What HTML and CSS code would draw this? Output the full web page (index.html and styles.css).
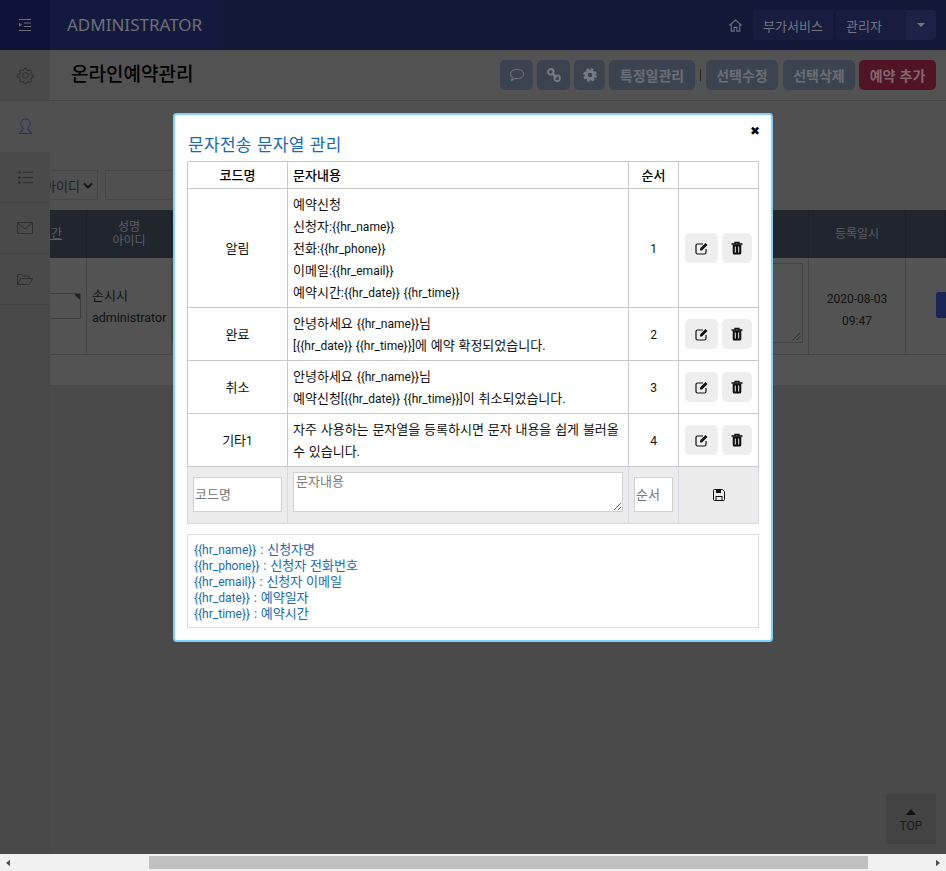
FILE: index.html
```html
<!DOCTYPE html>
<html lang="ko">
<head>
<meta charset="utf-8">
<title>온라인예약관리</title>
<link rel="stylesheet" href="styles.css">
</head>
<body>
<div class="page">
  <header class="topbar">
    <div class="burger">
      <svg class="ico16" viewBox="0 0 14 14"><path d="M1 1.500h12M6 5h7M6 8.500h7M1 12.500h12" stroke="#6a6f80" fill="none"/><path d="M1 4.800l3 2-3 2z" fill="#6a6f80"/></svg>
    </div>
    <div class="brand">ADMINISTRATOR</div>
    <nav class="topnav">
      <svg class="home" viewBox="0 0 16 16"><path d="M1.500 8L8 2l6.500 6M3.500 7v7h3v-4h3v4h3V7" fill="none" stroke="#70747f" stroke-width="1.100"/></svg>
      <span class="navbtn service">부가서비스</span>
      <span class="navgroup"><span class="navbtn admin">관리자</span><span class="navbtn caret"><i></i></span></span>
    </nav>
  </header>
  <div class="body">
    <aside class="side">
      <div class="sideitem">
        <svg class="ico18" viewBox="0 0 18 18"><circle cx="9" cy="9" r="3" fill="none" stroke="#2a2a2a"/><path d="M7.800 1.500h2.400l.4 2 1.500.7 1.800-1.100 1.700 1.700-1.100 1.800.7 1.500 2 .4v2.400l-2 .4-.7 1.500 1.100 1.800-1.700 1.700-1.800-1.100-1.500.7-.4 2H7.800l-.4-2-1.500-.7-1.800 1.100-1.700-1.700 1.100-1.800-.7-1.500-2-.4V8l2-.4.7-1.500-1.100-1.800 1.700-1.700 1.800 1.100 1.500-.7z" fill="none" stroke="#2a2a2a"/></svg>
      </div>
      <div class="sideitem active">
        <svg class="ico18" viewBox="0 0 18 18"><path d="M2 16.500h14M3 16.500c0-3 3.500-3 3.500-5.500C4.800 9.500 4 7.500 4 6c0-3 2-5 5-5s5 2 5 5c0 1.500-.8 3.500-2.500 5 0 2.500 3.500 2.500 3.500 5.500" fill="none" stroke="#25306e" stroke-width="1.100"/></svg>
      </div>
      <div class="sideitem">
        <svg class="ico18" viewBox="0 0 18 18"><path d="M6 3.500h11M6 9h11M6 14.500h11" stroke="#2a2a2a" fill="none"/><path d="M2.500 2v3M1 3.500h3M2.500 7.500v3M1 9h3M2.500 13v3M1 14.500h3" stroke="#2a2a2a" fill="none"/></svg>
      </div>
      <div class="sideitem">
        <svg class="ico-mail" viewBox="0 0 16 12"><path d="M.5.500h15v11H.500zM.5 1l7.500 6 7.500-6" fill="none" stroke="#2a2a2a" stroke-width=".8"/></svg>
      </div>
      <div class="sideitem">
        <svg class="ico-mail" viewBox="0 0 16 12"><path d="M.5 11.500V1.500h4.500l1.500 1.500h6v2.500M.5 11.500h12l3-6H3.500z" fill="none" stroke="#2a2a2a" stroke-width=".8"/></svg>
      </div>
    </aside>
    <main class="main">
      <div class="titlebar">
        <h1 class="pagetitle">온라인예약관리</h1>
        <div class="actions">
          <span class="btn ic33"><svg class="ico16" viewBox="0 0 16 16"><path d="M8 2.500c3.600 0 6.500 1.800 6.500 4.500S11.600 11.500 8 11.500c-.8 0-1.500-.1-2.200-.2L2.500 13.500l1-3C2.200 9.600 1.500 8.400 1.500 7 1.500 4.300 4.400 2.500 8 2.500z" fill="none" stroke="#6b7078" stroke-width="1.200"/></svg></span>
          <span class="btn ic33"><svg class="ico16" viewBox="0 0 16 16"><path d="M6 6l4.500 4.500" stroke="#777c84" stroke-width="2.400"/><circle cx="4.800" cy="4.800" r="2.800" fill="none" stroke="#777c84" stroke-width="1.800"/><circle cx="11.200" cy="11.200" r="2.800" fill="none" stroke="#777c84" stroke-width="1.800"/></svg></span>
          <span class="btn ic31"><svg class="ico14" viewBox="0 0 14 14"><circle cx="7" cy="7" r="3.800" fill="none" stroke="#777c84" stroke-width="3"/><circle cx="7" cy="7" r="5.700" fill="none" stroke="#777c84" stroke-width="2.200" stroke-dasharray="2.600 1.875"/></svg></span>
          <span class="btn wide">특정일관리</span>
          <span class="sep"></span>
          <span class="btn">선택수정</span>
          <span class="btn after">선택삭제</span>
          <span class="btn red">예약 추가</span>
        </div>
      </div>
      <section class="content">
        <div class="search">
          <span class="selectbox"><span class="selecttext">아이디</span><svg class="chev" viewBox="0 0 10 7"><path d="M1 1.500l4 4 4-4" fill="none" stroke="#111" stroke-width="2"/></svg></span>
          <span class="searchinput"></span>
        </div>
        <div class="bgtable">
          <div class="bgcol c1">
            <div class="bghead"><span class="clip">기간</span></div>
            <div class="bgcell"><span class="bgbox"></span></div>
          </div>
          <div class="bgcol c2">
            <div class="bghead">성명<br>아이디</div>
            <div class="bgcell leftcell">손시시<br><span class="idtext">administrator</span></div>
          </div>
          <div class="bgcol c3">
            <div class="bghead"></div>
            <div class="bgcell endcell"><span class="bgarea"><svg class="grip" viewBox="0 0 10 10"><path d="M1 9l8-8M5 9l4-4" stroke="#2a2a2a"/></svg></span></div>
          </div>
          <div class="bgcol c4">
            <div class="bghead">등록일시</div>
            <div class="bgcell textcell">2020-08-03<br>09:47</div>
          </div>
          <div class="bgcol c5">
            <div class="bghead"></div>
            <div class="bgcell startcell"><span class="bluebtn"></span></div>
          </div>
        </div>
        <div class="bgfoot"></div>
      </section>
    </main>
  </div>
  <div class="hscroll">
    <svg class="arrow" viewBox="0 0 5 8"><path d="M5 0v8L0 4z" fill="#505050"/></svg>
    <div class="track"><div class="thumb"></div></div>
    <svg class="arrow" viewBox="0 0 5 8"><path d="M0 0v8l5-4z" fill="#505050"/></svg>
  </div>
</div>

<a class="totop"><i class="uptri"></i>TOP</a>

<div class="modal">
  <span class="close">✖</span>
  <h2 class="modaltitle">문자전송 문자열 관리</h2>
  <table class="smstable">
    <colgroup><col class="w1"><col class="w2"><col class="w3"><col class="w4"></colgroup>
    <thead>
      <tr><th>코드명</th><th class="left">문자내용</th><th>순서</th><th></th></tr>
    </thead>
    <tbody>
      <tr>
        <td>알림</td>
        <td class="left">예약신청<br>신청자:<span class="lt">{{hr_name}}</span><br>전화:<span class="lt">{{hr_phone}}</span><br>이메일:<span class="lt">{{hr_email}}</span><br>예약시간:<span class="lt">{{hr_date}} {{hr_time}}</span></td>
        <td class="num">1</td>
        <td><div class="rowbtns">
          <span class="mbtn edit"><svg class="ico14" viewBox="0 0 14 14"><path d="M11 8v3.500a1.500 1.500 0 0 1-1.500 1.500h-7A1.500 1.500 0 0 1 1 11.500v-7A1.500 1.500 0 0 1 2.500 3H8" fill="none" stroke="#111" stroke-width="1.200"/><path d="M5 7.500L10.500 2l2 2L7 9.500H5z" fill="#111"/></svg></span>
          <span class="mbtn del"><svg class="ico14" viewBox="0 0 14 14"><path d="M1.500 3h11M5 3V1.300h4V3" fill="none" stroke="#111" stroke-width="1.300"/><path d="M2.700 3.500h8.600v8.500a1.500 1.500 0 0 1-1.500 1.500H4.200A1.500 1.500 0 0 1 2.700 12z" fill="#111"/><path d="M5.300 5.500v6M8.700 5.500v6" stroke="#eee"/></svg></span>
        </div></td>
      </tr>
      <tr>
        <td>완료</td>
        <td class="left">안녕하세요 <span class="lt">{{hr_name}}</span>님<br><span class="lt">[{{hr_date}} {{hr_time}}]</span>에 예약 확정되었습니다.</td>
        <td class="num">2</td>
        <td><div class="rowbtns">
          <span class="mbtn edit"><svg class="ico14" viewBox="0 0 14 14"><path d="M11 8v3.500a1.500 1.500 0 0 1-1.500 1.500h-7A1.500 1.500 0 0 1 1 11.500v-7A1.500 1.500 0 0 1 2.500 3H8" fill="none" stroke="#111" stroke-width="1.200"/><path d="M5 7.500L10.500 2l2 2L7 9.500H5z" fill="#111"/></svg></span>
          <span class="mbtn del"><svg class="ico14" viewBox="0 0 14 14"><path d="M1.500 3h11M5 3V1.300h4V3" fill="none" stroke="#111" stroke-width="1.300"/><path d="M2.700 3.500h8.600v8.500a1.500 1.500 0 0 1-1.500 1.500H4.200A1.500 1.500 0 0 1 2.700 12z" fill="#111"/><path d="M5.300 5.500v6M8.700 5.500v6" stroke="#eee"/></svg></span>
        </div></td>
      </tr>
      <tr>
        <td>취소</td>
        <td class="left">안녕하세요 <span class="lt">{{hr_name}}</span>님<br>예약신청<span class="lt">[{{hr_date}} {{hr_time}}]</span>이 취소되었습니다.</td>
        <td class="num">3</td>
        <td><div class="rowbtns">
          <span class="mbtn edit"><svg class="ico14" viewBox="0 0 14 14"><path d="M11 8v3.500a1.500 1.500 0 0 1-1.500 1.500h-7A1.500 1.500 0 0 1 1 11.500v-7A1.500 1.500 0 0 1 2.500 3H8" fill="none" stroke="#111" stroke-width="1.200"/><path d="M5 7.500L10.500 2l2 2L7 9.500H5z" fill="#111"/></svg></span>
          <span class="mbtn del"><svg class="ico14" viewBox="0 0 14 14"><path d="M1.500 3h11M5 3V1.300h4V3" fill="none" stroke="#111" stroke-width="1.300"/><path d="M2.700 3.500h8.600v8.500a1.500 1.500 0 0 1-1.500 1.500H4.200A1.500 1.500 0 0 1 2.700 12z" fill="#111"/><path d="M5.300 5.500v6M8.700 5.500v6" stroke="#eee"/></svg></span>
        </div></td>
      </tr>
      <tr>
        <td>기타<span class="lt">1</span></td>
        <td class="left">자주 사용하는 문자열을 등록하시면 문자 내용을 쉽게 불러올 수 있습니다.</td>
        <td class="num">4</td>
        <td><div class="rowbtns">
          <span class="mbtn edit"><svg class="ico14" viewBox="0 0 14 14"><path d="M11 8v3.500a1.500 1.500 0 0 1-1.500 1.500h-7A1.500 1.500 0 0 1 1 11.500v-7A1.500 1.500 0 0 1 2.500 3H8" fill="none" stroke="#111" stroke-width="1.200"/><path d="M5 7.500L10.500 2l2 2L7 9.500H5z" fill="#111"/></svg></span>
          <span class="mbtn del"><svg class="ico14" viewBox="0 0 14 14"><path d="M1.500 3h11M5 3V1.300h4V3" fill="none" stroke="#111" stroke-width="1.300"/><path d="M2.700 3.500h8.600v8.500a1.500 1.500 0 0 1-1.500 1.500H4.200A1.500 1.500 0 0 1 2.700 12z" fill="#111"/><path d="M5.300 5.500v6M8.700 5.500v6" stroke="#eee"/></svg></span>
        </div></td>
      </tr>
      <tr class="formrow">
        <td><input class="field codeinput" placeholder="코드명"></td>
        <td><textarea class="field textinput" placeholder="문자내용"></textarea></td>
        <td><input class="field orderinput" placeholder="순서"></td>
        <td class="savecell"><svg class="ico12" viewBox="0 0 12 12"><path d="M1.500.500h8l2 2v8a1 1 0 0 1-1 1h-9a1 1 0 0 1-1-1v-9a1 1 0 0 1 1-1z" fill="none" stroke="#111"/><path d="M3 1h5v3H3zM2.500 7h7v4.500h-7z" fill="#111"/><path d="M3.500 8h5v3h-5z" fill="#eee"/></svg></td>
      </tr>
    </tbody>
  </table>
  <div class="legend">
    <span class="lt">{{hr_name}}</span> : 신청자명<br>
    <span class="lt">{{hr_phone}}</span> : 신청자 전화번호<br>
    <span class="lt">{{hr_email}}</span> : 신청자 이메일<br>
    <span class="lt">{{hr_date}}</span> : 예약일자<br>
    <span class="lt">{{hr_time}}</span> : 예약시간
  </div>
</div>
</body>
</html>
```
FILE: styles.css
```css
* { box-sizing: border-box; }
html, body { margin: 0; height: 100%; overflow: hidden; }
body { font-family: Roboto, "Noto Sans CJK KR", sans-serif; font-size: 13px; color: #111; background: #4a4a4a; word-spacing: .6px; }
svg { display: block; }
.lt { font-size: 12px; line-height: 1; }
.ico12 { width: 12px; height: 12px; margin: 0 auto; }
.ico14 { width: 14px; height: 14px; }
.ico16 { width: 16px; height: 16px; }
.ico18 { width: 17px; height: 17px; }
.ico-mail { width: 16px; height: 12px; }

.page { height: 871px; display: flex; flex-direction: column; }

/* top bar */
.topbar { height: 50px; flex: none; display: flex; align-items: center; background: #131838; }
.burger { width: 50px; height: 50px; background: #0f1338; display: flex; align-items: center; justify-content: center; }
.burger .ico16 { width: 14px; height: 14px; }
.brand { width: 170px; height: 50px; padding-left: 17px; background: #141a3e; color: #6f7078; font-family: "Noto Sans", sans-serif; font-size: 17px; line-height: 49px; }
.topnav { margin-left: auto; padding-right: 10px; display: flex; align-items: center; }
.home { width: 15px; height: 15px; margin-right: 10px; }
.navbtn { height: 30px; display: flex; align-items: center; justify-content: center; background: #181d40; color: #72747e; font-size: 13px; border-radius: 3px; }
.service { width: 80px; margin-right: 3px; }
.navgroup { display: flex; }
.admin { width: 70px; justify-content: flex-start; padding-left: 10px; border-radius: 3px 0 0 3px; }
.caret { width: 30px; background: #1c2145; border-radius: 0 3px 3px 0; }
.caret i { border: 4px solid transparent; border-top: 4px solid #72747e; border-bottom: 0; }

/* body */
.body { flex: 1; min-height: 0; display: flex; }
.side { width: 50px; flex: none; background: #484848; }
.sideitem { height: 51px; display: flex; align-items: center; justify-content: center; border-bottom: 1px solid #444; background: #4a4a4a; }
.sideitem.active { background: #505050; border-bottom-color: #505050; }
.main { flex: 1; min-width: 0; overflow: hidden; }
.titlebar { height: 51px; display: flex; align-items: center; justify-content: space-between; padding: 0 10px 1px 21px; background: #525252; border-bottom: 1px solid #454545; }
.pagetitle { margin: 0; font-size: 19px; line-height: 26px; font-weight: 500; color: #000; }
.actions { display: flex; align-items: center; gap: 4px; }
.btn { width: 72px; height: 30px; display: flex; align-items: center; justify-content: center; border-radius: 5px; background: #3c4350; color: #6a6e76; font-size: 14px; font-weight: 700; }
.wide { width: 86px; }
.ic33 { width: 33px; }
.ic31 { width: 31px; }
.red { width: 77px; background: #501425; color: #846670; }
.sep { width: 1px; height: 12px; background: #222; margin: 0 1px; }
.after { margin-left: 1px; }

.content { background: #505050; }
.search { height: 109px; padding-top: 69px; display: flex; align-items: flex-start; }
.selectbox { width: 48px; height: 30px; display: flex; align-items: center; justify-content: flex-end; border: 1px solid #464646; border-left: 0; padding-right: 4px; gap: 3px; overflow: hidden; }
.selecttext { flex: none; color: #222; }
.chev { width: 10px; height: 7px; flex: none; }
.searchinput { width: 70px; height: 30px; margin-left: 7px; border: 1px solid #464646; }

.bgtable { display: flex; height: 145px; }
.bgcol { flex: none; overflow: hidden; }
.c1 { width: 37px; }
.c2 { width: 85px; }
.c3 { width: 637px; }
.c4 { width: 97px; }
.c5 { flex: 1; width: 40px; }
.bghead { height: 48px; background: #21252d; border-right: 1px solid #1c2028; color: #5c5f65; font-size: 12px; line-height: 14px; display: flex; align-items: center; justify-content: center; text-align: center; }
.clip { margin-left: -34px; white-space: nowrap; text-decoration: underline; }
.bgcell { height: 97px; background: #535353; border-right: 1px solid #454545; border-bottom: 1px solid #454545; display: flex; align-items: center; justify-content: center; text-align: center; line-height: 22px; font-size: 13px; color: #111; }
.leftcell { display: block; text-align: left; padding: 27px 0 0 5px; }
.idtext { font-size: 12.500px; line-height: 1; }
.textcell { padding-top: 7px; font-size: 12px; }
.endcell { justify-content: flex-end; padding-right: 5px; }
.startcell { justify-content: flex-start; border-right: 0; }
.bgbox { width: 31px; height: 26px; border: 1px solid #3e3e3e; border-left: 0; position: relative; margin-right: 5px; }
.bgbox::after { content: ""; position: absolute; top: 0; right: 0; border-top: 6px solid #222; border-left: 6px solid transparent; }
.bgarea { width: 640px; height: 80px; border: 1px solid #424242; position: relative; display: block; margin-top: -6px; }
.grip { position: absolute; right: 1px; bottom: 1px; width: 9px; height: 9px; }
.bluebtn { width: 12px; height: 26px; margin-left: 30px; background: #1a2455; border-radius: 3px 0 0 3px; display: block; margin-top: -2px; }
.bgfoot { height: 30px; background: #535353; }

/* scrollbar */
.hscroll { height: 17px; flex: none; display: flex; align-items: center; background: #f1f1f1; }
.arrow { width: 4px; height: 8px; margin: 0 6px; flex: none; }
.track { flex: 1; height: 13px; }
.thumb { width: 719px; height: 13px; margin-left: 133px; background: #c0c0c0; }

/* top button */
.totop { position: fixed; left: 886px; top: 794px; width: 50px; height: 50px; background: #434343; color: #1a1a1a; font-size: 12px; line-height: 14px; text-align: center; padding-top: 15px; }
.uptri { display: block; width: 0; margin: 0 auto 4px; border: 5px solid transparent; border-top: 0; border-bottom: 6px solid #111; }

/* modal */
.modal { position: fixed; left: 173px; top: 113px; width: 600px; height: 529px; background: #fff; border: 2px solid #7fd2fb; border-radius: 4px; padding: 17px 12px 0; }
.close { position: absolute; right: 11px; top: 8px; font-size: 12px; line-height: 16px; color: #000; font-family: "DejaVu Sans", sans-serif; }
.modaltitle { margin: 0 0 3px 1px; font-size: 17px; line-height: 26px; font-weight: 400; color: #1b69ad; letter-spacing: .3px; }
.smstable { width: 571px; border-collapse: collapse; table-layout: fixed; line-height: 22px; color: #111; text-align: center; }
.w1 { width: 100px; }
.w2 { width: 341px; }
.w3 { width: 50px; }
.w4 { width: 80px; }
.smstable th, .smstable td { border: 1px solid #c9c9c9; padding: 5px 5px 3px; vertical-align: middle; }
.smstable th { height: 27px; padding: 3px 5px 1px; font-weight: 500; color: #000; }
.smstable .left { text-align: left; }
.smstable .num { font-size: 12px; }
.rowbtns { display: flex; justify-content: center; gap: 4px; margin: -1px 0 1px; }
.mbtn { height: 30px; background: #eee; border-radius: 5px; display: flex; align-items: center; justify-content: center; }
.edit { width: 33px; }
.del { width: 30px; }
.smstable .formrow td { background: #ececec; border-color: #d5dae3; padding: 5px 5px 11px; vertical-align: top; }
.smstable .formrow .savecell { padding: 0; vertical-align: middle; }
.field { display: block; border: 1px solid #d0d0d0; background: #fff; font: inherit; padding: 0 1px; color: #111; border-radius: 0; outline: 0; }
.field::placeholder { color: #777; opacity: 1; }
.codeinput { width: 89px; height: 35px; margin-top: 5px; }
.textinput { width: 330px; height: 40px; padding: 0 2px; line-height: 18px; resize: both; }
.orderinput { width: 39px; height: 35px; margin-top: 5px; }
.legend { margin-top: 10px; width: 572px; height: 94px; border: 1px solid #dcdcdc; padding: 7px 6px 5px; line-height: 16px; color: #1b69ad; }
```
